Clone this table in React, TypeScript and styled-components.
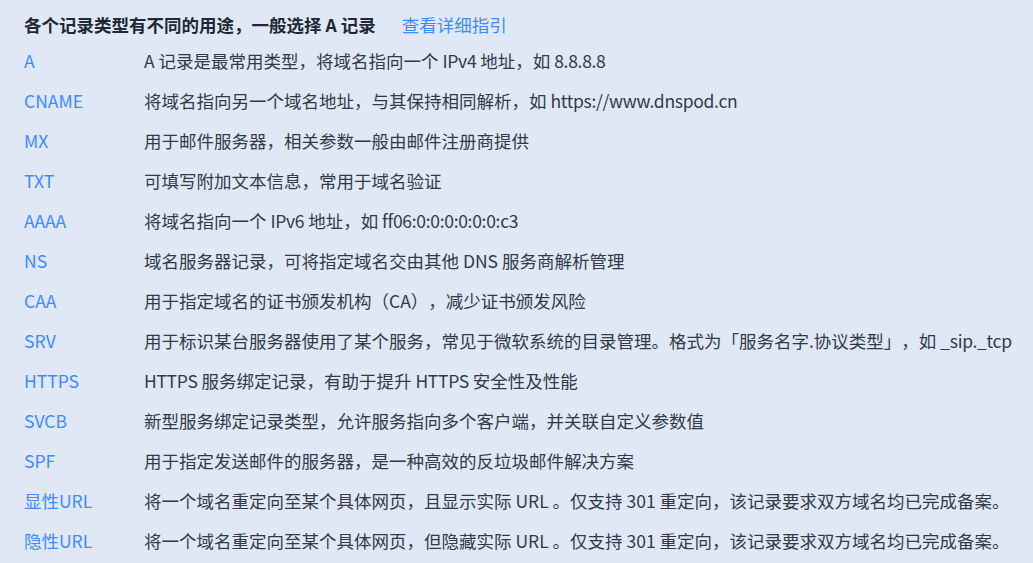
import React from "react";
import styled, { createGlobalStyle } from "styled-components";

const Global = createGlobalStyle`
  html, body { margin: 0; padding: 0; background: #e0e8f6; }
  body { font-family: "Noto Sans CJK SC", "Noto Sans", sans-serif; text-spacing-trim: space-all; }
`;

const Panel = styled.div`
  width: 1033px;
  height: 563px;
  box-sizing: border-box;
  padding: 8px 0 0 24px;
  background: #e0e8f6;
  color: #333a47;
  font-size: 17.5px;
  text-spacing-trim: space-all;
`;

const Header = styled.div`
  display: flex;
  align-items: center;
  height: 32px;
  gap: 26px;
`;

const Title = styled.span`
  font-weight: 700;
  color: #222833;
`;

const Link = styled.a`
  color: #3d8bff;
  text-decoration: none;
`;

const List = styled.div`
  display: grid;
  grid-template-columns: 120px 1fr;
  grid-auto-rows: 40px;
  align-items: center;
`;

const Type = styled.span`
  color: #3d8bff;
  white-space: nowrap;
`;

const Desc = styled.span`
  white-space: nowrap;
`;

const Latin = styled.span`
  letter-spacing: -0.3px;
`;

const rows: [string, string][] = [
  ["A", "A 记录是最常用类型，将域名指向一个 IPv4 地址，如 8.8.8.8"],
  ["CNAME", "将域名指向另一个域名地址，与其保持相同解析，如 https://www.dnspod.cn"],
  ["MX", "用于邮件服务器，相关参数一般由邮件注册商提供"],
  ["TXT", "可填写附加文本信息，常用于域名验证"],
  ["AAAA", "将域名指向一个 IPv6 地址，如 ff06:0:0:0:0:0:0:c3"],
  ["NS", "域名服务器记录，可将指定域名交由其他 DNS 服务商解析管理"],
  ["CAA", "用于指定域名的证书颁发机构（CA），减少证书颁发风险"],
  ["SRV", "用于标识某台服务器使用了某个服务，常见于微软系统的目录管理。格式为「服务名字.协议类型」，如 _sip._tcp"],
  ["HTTPS", "HTTPS 服务绑定记录，有助于提升 HTTPS 安全性及性能"],
  ["SVCB", "新型服务绑定记录类型，允许服务指向多个客户端，并关联自定义参数值"],
  ["SPF", "用于指定发送邮件的服务器，是一种高效的反垃圾邮件解决方案"],
  ["显性URL", "将一个域名重定向至某个具体网页，且显示实际 URL 。仅支持 301 重定向，该记录要求双方域名均已完成备案。"],
  ["隐性URL", "将一个域名重定向至某个具体网页，但隐藏实际 URL 。仅支持 301 重定向，该记录要求双方域名均已完成备案。"],
];

const renderDesc = (d: string) =>
  d.split(/([A-Za-z0-9:/._]{4,})/).map((part, i) =>
    i % 2 === 1 ? <Latin key={i}>{part}</Latin> : <React.Fragment key={i}>{part}</React.Fragment>
  );

export default function App() {
  return (
    <>
      <Global />
      <Panel>
        <Header>
          <Title>各个记录类型有不同的用途，一般选择 A 记录</Title>
          <Link href="#">查看详细指引</Link>
        </Header>
        <List>
          {rows.map(([t, d]) => (
            <React.Fragment key={t}>
              <Type>{t}</Type>
              <Desc>{renderDesc(d)}</Desc>
            </React.Fragment>
          ))}
        </List>
      </Panel>
    </>
  );
}
